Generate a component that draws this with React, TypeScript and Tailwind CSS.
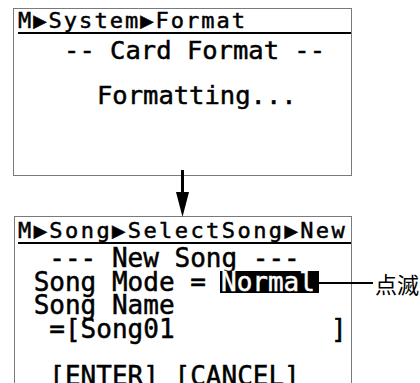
import React from "react";

const lcd = "font-['DejaVu_Sans_Mono','Liberation_Mono',monospace] [-webkit-text-stroke:0.5px_currentColor]";

export default function App() {
  return (
    <div className="relative w-[420px] h-[383px] overflow-hidden bg-white text-black">
      {/* Top screen */}
      <div className="ml-[13px] mt-[8px] w-[339px] h-[168px] border border-[#7a7a7a] box-border">
        <div
          className={`${lcd} ml-[4px] pt-[1px] text-[22px] leading-[22px] tracking-[2.03px] whitespace-pre border-b-2 border-black`}
        >
          M▶System▶Format
        </div>
        <div className={`${lcd} mt-[4.5px] pl-[4px] text-[25.5px] leading-[22.5px] whitespace-pre`}>
          <div>{"   -- Card Format --"}</div>
          <div>{" "}</div>
          <div className="pl-[79px]">Formatting...</div>
        </div>
      </div>

      {/* Arrow connecting the two screens */}
      <svg
        className="absolute left-[176px] top-[170px]"
        width="13"
        height="47"
        viewBox="0 0 13 47"
      >
        <rect x="5" y="0" width="3" height="26" fill="#000" />
        <polygon points="0,22 13,22 6.5,47" fill="#000" />
      </svg>

      {/* Bottom screen */}
      <div className="ml-[14px] mt-[40px] w-[338px] h-[200px] border border-[#7a7a7a] box-border">
        <div
          className={`${lcd} ml-[3px] pt-[3.4px] text-[22px] leading-[22px] tracking-[2.43px] whitespace-pre border-b-2 border-black`}
        >
          M▶Song▶SelectSong▶New
        </div>
        <div className={`${lcd} mt-[2.8px] pl-[3px] text-[26px] leading-[23.5px] whitespace-pre`}>
          <div>{"  --- New Song ---"}</div>
          <div className="flex items-center">
            <span>{" Song Mode = "}</span>
            <span className="relative inline-block h-[22px] leading-[22px] bg-black text-white pl-[1px] pr-[4px] -ml-[1.5px]">
              Normal
              <span className="absolute left-full top-[11px] w-[54px] h-[1.5px] bg-black" />
            </span>
          </div>
          <div>{" Song Name"}</div>
          <div>{"  =[Song01          ]"}</div>
          <div>{" "}</div>
          <div>{"  [ENTER] [CANCEL]"}</div>
        </div>
      </div>

      {/* Annotation label */}
      <div className="absolute left-[375px] top-[270px] text-[22px] leading-[26px] font-['Noto_Sans_CJK_JP',sans-serif]">
        点滅
      </div>
    </div>
  );
}
